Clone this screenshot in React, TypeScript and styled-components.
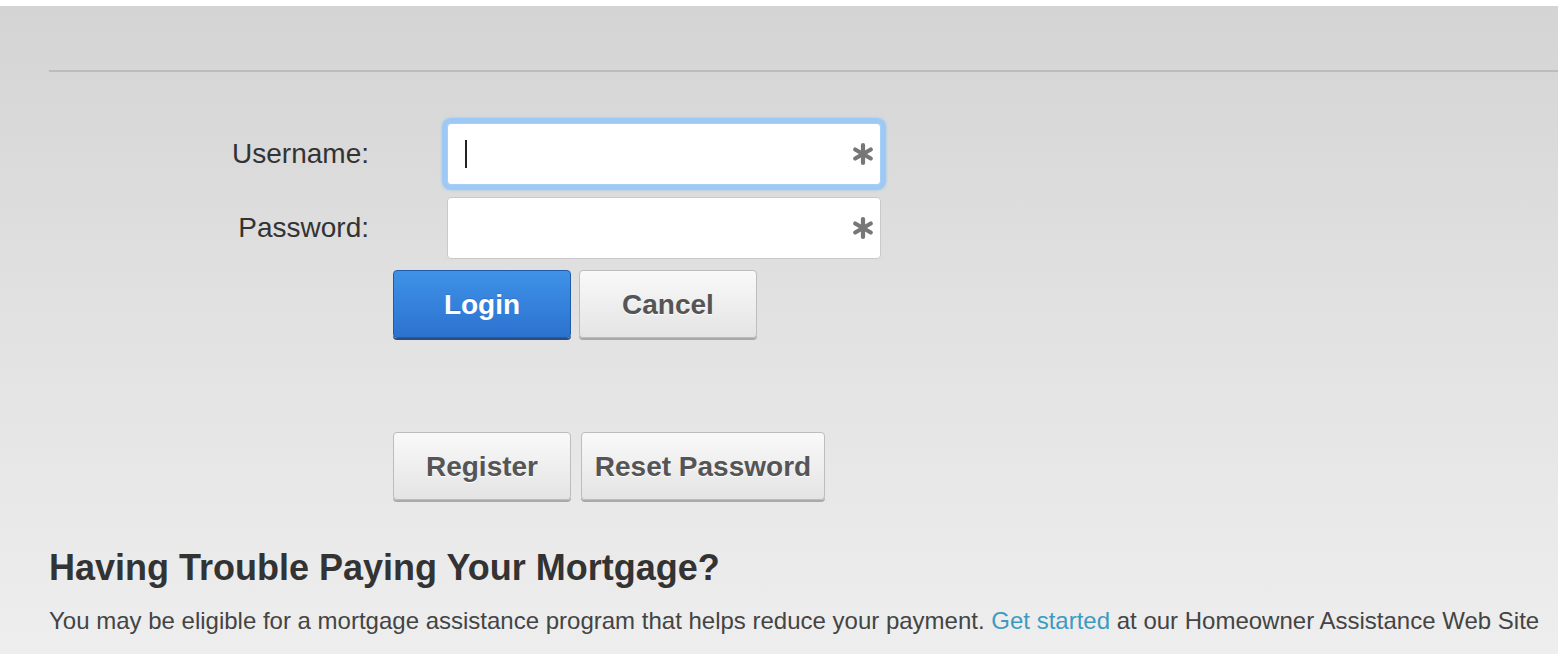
import React from "react";
import styled, { createGlobalStyle, css } from "styled-components";

const Global = createGlobalStyle`
  html, body { margin: 0; padding: 0; }
  body { font-family: "Liberation Sans", Arial, sans-serif; }
  * { box-sizing: border-box; }
`;

const Page = styled.div`
  min-height: 100vh;
  border-top: 6px solid #ffffff;
  background: linear-gradient(180deg, #d4d4d4 0%, #e2e2e2 50%, #eeeeee 100%);
  padding-left: 49px;
  overflow: hidden;
`;

const TopBar = styled.div`
  height: 66px;
  border-bottom: 2px solid #bcbcbc;
`;

const Form = styled.div`
  padding-top: 51px;
  display: flex;
  flex-direction: column;
`;

const FieldRow = styled.div<{ $gap?: number }>`
  display: grid;
  grid-template-columns: 320px 434px;
  column-gap: 78px;
  align-items: center;
  margin-bottom: ${(p) => p.$gap ?? 12}px;
`;

const Label = styled.label`
  text-align: right;
  font-size: 28px;
  color: #333333;
`;

const InputBox = styled.div<{ $focused?: boolean }>`
  position: relative;
  height: 62px;
  background: #ffffff;
  border-radius: 4px;
  border: 1px solid ${(p) => (p.$focused ? "#a6cff5" : "#c9c9c9")};
  ${(p) =>
    p.$focused &&
    css`
      box-shadow: 0 0 0 5px #9ec9f4, 0 0 2px 6px rgba(158, 201, 244, 0.5);
    `}
  display: flex;
  align-items: center;
  padding: 0 14px 0 17px;
`;

const Caret = styled.span`
  width: 2px;
  height: 28px;
  background: #222;
`;

const Required = styled.span`
  position: absolute;
  right: 5px;
  top: 50%;
  transform: translateY(-50%);
  display: flex;
`;

const ButtonRow = styled.div<{ $gap: number; $mb: number }>`
  display: flex;
  gap: ${(p) => p.$gap}px;
  margin-left: 344px;
  margin-bottom: ${(p) => p.$mb}px;
`;

const Button = styled.button<{ $primary?: boolean; $w: number }>`
  width: ${(p) => p.$w}px;
  height: 68px;
  border-radius: 4px;
  font-family: "Liberation Sans", Arial, sans-serif;
  font-weight: bold;
  font-size: 28px;
  cursor: pointer;
  padding: 2px 0 0;
  ${(p) =>
    p.$primary
      ? css`
          color: #ffffff;
          background: linear-gradient(180deg, #3f92e8 0%, #2b72cf 100%);
          border: 1px solid #1f5ba8;
          box-shadow: 0 2px 0 #2a4f7e;
          text-shadow: 0 -1px 0 rgba(0, 0, 0, 0.15);
        `
      : css`
          color: #555555;
          background: linear-gradient(180deg, #f9f9f9 0%, #e4e4e4 100%);
          border: 1px solid #bdbdbd;
          box-shadow: 0 2px 0 #a9a9a9;
          text-shadow: 0 1px 0 #ffffff;
        `}
`;

const Heading = styled.h2`
  margin: 0;
  font-size: 36px;
  font-weight: bold;
  color: #333333;
  line-height: 40px;
`;

const Paragraph = styled.p`
  margin: 18px 0 0;
  font-size: 24px;
  color: #444444;
  line-height: 30px;
  white-space: nowrap;
`;

const Link = styled.a`
  color: #3d9bc2;
  text-decoration: none;
`;

const Asterisk = () => (
  <svg width="24" height="24" viewBox="0 0 24 24">
    <g stroke="#777" strokeWidth="4.2" strokeLinecap="round">
      <line x1="12" y1="3" x2="12" y2="21" />
      <line x1="4.2" y1="7.5" x2="19.8" y2="16.5" />
      <line x1="4.2" y1="16.5" x2="19.8" y2="7.5" />
    </g>
  </svg>
);

export default function App() {
  return (
    <>
      <Global />
      <Page>
        <TopBar />
        <Form>
          <FieldRow>
            <Label>Username:</Label>
            <InputBox $focused>
              <Caret />
              <Required>
                <Asterisk />
              </Required>
            </InputBox>
          </FieldRow>
          <FieldRow $gap={11}>
            <Label>Password:</Label>
            <InputBox>
              <Required>
                <Asterisk />
              </Required>
            </InputBox>
          </FieldRow>
          <ButtonRow $gap={8} $mb={94}>
            <Button $primary $w={178}>Login</Button>
            <Button $w={178}>Cancel</Button>
          </ButtonRow>
          <ButtonRow $gap={10} $mb={48}>
            <Button $w={178}>Register</Button>
            <Button $w={244}>Reset Password</Button>
          </ButtonRow>
          <Heading>Having Trouble Paying Your Mortgage?</Heading>
          <Paragraph>
            You may be eligible for a mortgage assistance program that helps reduce your payment.{" "}
            <Link href="#">Get started</Link> at our Homeowner Assistance Web Site
          </Paragraph>
        </Form>
      </Page>
    </>
  );
}
